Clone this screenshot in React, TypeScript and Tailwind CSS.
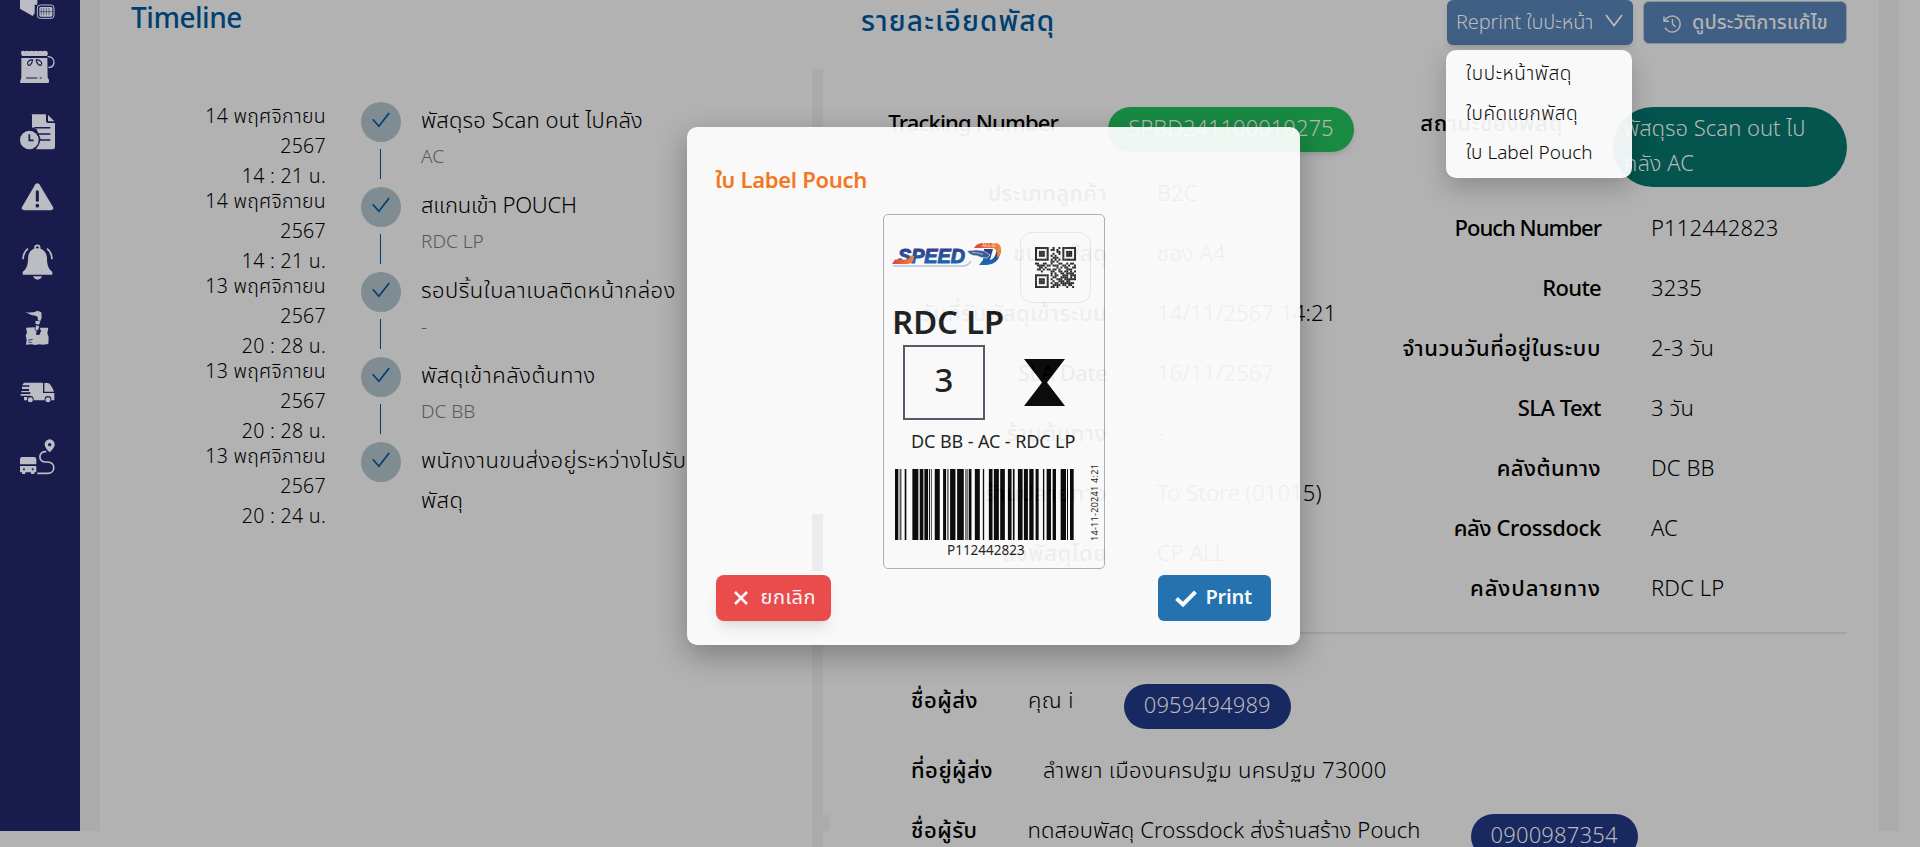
import type { ReactNode } from "react";

const events = [
  { date: "14 พฤศจิกายน", time: "14 : 21 น.", title: "พัสดุรอ Scan out ไปคลัง", place: "AC", fit: "tracking-[.15px]" },
  { date: "14 พฤศจิกายน", time: "14 : 21 น.", title: "สแกนเข้า POUCH", place: "RDC LP", fit: "tracking-[-.2px]" },
  { date: "13 พฤศจิกายน", time: "20 : 28 น.", title: "รอปริ้นใบลาเบลติดหน้ากล่อง", place: "-", fit: "tracking-[.5px]" },
  { date: "13 พฤศจิกายน", time: "20 : 28 น.", title: "พัสดุเข้าคลังต้นทาง", place: "DC BB", fit: "tracking-[.6px]" },
  { date: "13 พฤศจิกายน", time: "20 : 24 น.", title: "พนักงานขนส่งอยู่ระหว่างไปรับพัสดุ", place: "", fit: "tracking-[.45px]" },
];

const leftRows = [
  ["ประเภทลูกค้า", "B2C", "tracking-[.45px]"],
  ["ขนาดพัสดุ", "ซอง A4", "tracking-[.45px]"],
  ["วันที่รับพัสดุเข้าระบบ", "14/11/2567 14:21", "tracking-[.5px]"],
  ["SLA Date", "16/11/2567", "tracking-[-.6px]"],
  ["ร้านต้นทาง", "-", "tracking-[.5px]"],
  ["ร้านปลายทาง", "To Store (01015)", "tracking-[.5px]"],
  ["ส่งพัสดุโดย", "CP ALL", "tracking-[.5px]"],
];

const rightRows = [
  ["Pouch Number", "P112442823", "tracking-[-1px]"],
  ["Route", "3235", "tracking-[-.7px]"],
  ["จำนวนวันที่อยู่ในระบบ", "2-3 วัน", "tracking-[.6px]"],
  ["SLA Text", "3 วัน", "tracking-[-.5px]"],
  ["คลังต้นทาง", "DC BB", "tracking-[.4px]"],
  ["คลัง Crossdock", "AC", "tracking-[-.35px]"],
  ["คลังปลายทาง", "RDC LP", "tracking-[.9px]"],
];

const bars = [
  [76, 10], [90, 3], [96, 1], [105, 5], [128, 18], [150, 11], [164, 11], [178, 3], [184, 2], [195, 15], [220, 9],
  [233, 3], [241, 16], [262, 20], [287, 3], [293, 2], [297, 8], [315, 15], [339, 4], [357, 11], [372, 15],
  [391, 14], [414, 11], [429, 5], [444, 14], [462, 12], [478, 13], [497, 9], [519, 4], [530, 13], [548, 10],
  [572, 16], [591, 3], [600, 11],
];

const qr = [
  "111111100100101111111",
  "100000101101001000001",
  "101110100001101011101",
  "101110100100101011101",
  "101110101010001011101",
  "100000100111001000001",
  "111111101010101111111",
  "000000001101000000000",
  "110011001000110010110",
  "011110110111001101001",
  "001101000001010110011",
  "011010110110100011100",
  "000100001100110110101",
  "000000001010011011110",
  "111111101011001110111",
  "100000100110011110101",
  "101110101001110111111",
  "101110100100111011000",
  "101110101011011111110",
  "100000100111101101100",
  "111111101101000010010",
];

function SideIcons() {
  return (
    <nav className="flex h-[831px] w-20 shrink-0 flex-col bg-[#191b4d] pl-[19px] text-[#bbbcc4]">
      <svg className="h-[19px] w-9" viewBox="57 0 108 57" fill="currentColor">
        <path d="M60 0h52v14h-8v26l-6 8-38-22z" />
        <rect x="112" y="15" width="50" height="40" rx="9" stroke="currentColor" strokeWidth="3" fill="#191b4d" />
        <rect x="118" y="21" width="39" height="29" rx="4" />
        <path d="M124 24v22M131 24v22M139 24v22M147 24v22M119 35h37" stroke="#191b4d" strokeWidth="1.6" />
      </svg>
      <svg className="mt-[31px] h-[33px] w-9" viewBox="57 149 108 99" fill="currentColor">
        <path d="M64 153q6-4 11 0 7-4 13 0 7-4 13 0 7-4 13 0 7-4 13 0 7-4 14 0l3 6-3 8H66l-3-8zM64 173h78l1 59 4 6v8q-3 3-8 2H66q-6 1-6-4l4-12z" />
        <path d="M66 170h74" stroke="#191b4d" strokeWidth="3" />
        <path d="M143 169c13-1 20 9 19 18s-7 15-17 14" fill="none" stroke="currentColor" strokeWidth="4" />
        <path d="M98 178c-12 0-18 9-14 15s12-2 14-15m10 0c12 0 20 9 16 15s-14-2-16-15M78 233h34m7 0h6" fill="none" stroke="#191b4d" strokeWidth="3.5" />
      </svg>
      <svg className="mt-[31px] h-9 w-9" viewBox="57 341 108 108" fill="currentColor">
        <path d="M92 342h46v20q0 6 6 6h21v72q0 7-7 7h-50l14-30-12-30-14-6v-42q0-7 6-7z" />
        <path d="M144 344l19 19h-19z" />
        <path d="M102 382h49M112 401h39M118 419h33" stroke="#191b4d" strokeWidth="4.5" />
        <circle cx="88" cy="419" r="32" fill="#191b4d" />
        <circle cx="88" cy="419" r="28" />
        <path d="M88 402v18h13" fill="none" stroke="#191b4d" strokeWidth="5" />
      </svg>
      <svg className="mt-[33px] h-[28px] w-9" viewBox="57 548 108 84" fill="currentColor">
        <path d="M106 552q6-7 12 0l41 68q3 8-6 10H72q-9-2-6-10z" />
        <path d="M112 574v26" stroke="#191b4d" strokeWidth="9" strokeLinecap="round" />
        <circle cx="112" cy="616" r="5.5" fill="#191b4d" />
      </svg>
      <svg className="mt-[33px] h-9 w-9" viewBox="57 730 108 108" fill="currentColor">
        <circle cx="112" cy="741" r="7" fill="none" stroke="currentColor" strokeWidth="5" />
        <path d="M112 743c-18 0-28 14-28 30 0 24-6 32-16 41v8h89v-8c-10-9-16-17-16-41 0-16-11-30-29-30zM99 827h27q-4 10-13 10t-14-10z" />
        <path d="M84 744q-14 10-15 32M141 744q14 10 15 32" fill="none" stroke="currentColor" strokeWidth="5" />
      </svg>
      <svg className="mt-[30px] h-[36px] w-9" viewBox="57 928 108 108" fill="currentColor">
        <path d="M75 934q20 5 38-4l11 5 1 16-4 10-7-2-1-6q2-5-4-7-17-2-34-12zM107 960l14 2-4 10-11-3z" />
        <path d="M78 981l27-1-1 8 6 2-2 12 10 1 6-14-4-2 1-6 24 0-3 17 4 12-1 20-17 2-9-1-14 2-10-2-17 1 2-14-3-14 4-8z" />
        <path d="M108 974l10 3-4 12-8-2z" />
        <path d="M84 1019l14-3M86 1025h9" fill="none" stroke="#191b4d" strokeWidth="2.5" />
      </svg>
      <svg className="mt-[36px] h-[22px] w-9" viewBox="57 1144 108 66" fill="currentColor">
        <path d="M72 1146h57v31h34v22H72v-10h20v-4H62v-5h29v-5H64v-4h23v-6H66v-7h22v-4H66zM133 1147h10q9 0 19 26h-29z" />
        <circle cx="91" cy="1196" r="10" fill="#191b4d" />
        <circle cx="91" cy="1197" r="7.5" />
        <circle cx="144" cy="1196" r="10" fill="#191b4d" />
        <circle cx="144" cy="1197" r="7.5" />
      </svg>
      <svg className="mt-[35px] h-9 w-9" viewBox="57 1316 108 108" fill="currentColor">
        <path d="M149 1317a15 15 0 0 1 15 16q-1 10-15 23-14-13-15-23a15 15 0 0 1 15-16z" />
        <circle cx="149" cy="1333" r="5" fill="#191b4d" />
        <path d="M139 1354c-25-3-25 31-4 31h8c25 0 24 34 0 34h-31" fill="none" stroke="currentColor" strokeWidth="5" />
        <path d="M66 1370h36q6 0 7 6v16H60v-16q1-6 6-6zM60 1397h49v19h-6v5H93v-5H76v5H66v-5h-6z" />
        <circle cx="72" cy="1407" r="3" fill="#191b4d" />
        <circle cx="98" cy="1407" r="3" fill="#191b4d" />
      </svg>
    </nav>
  );
}

function Timeline() {
  return (
    <section className="flex w-[712px] shrink-0 flex-col">
      <h2 className="ml-[31px] h-[102px] text-[28px] leading-[40px] font-medium tracking-[-.5px] text-[#003f71]">Timeline</h2>
      {events.map((e, i) => (
        <div key={i} className="flex h-[85px]">
          <div className="w-[226px] shrink-0 text-right text-[19.500px] leading-[30px] font-light tracking-[.3px]">
            <p>{e.date}</p>
            <p>2567</p>
            <p>{e.time}</p>
          </div>
          <div className="ml-[35px] flex w-10 shrink-0 flex-col items-center">
            <div className="flex h-10 w-10 items-center justify-center rounded-full bg-[#7f8c91]">
              <svg className="mb-1 h-4 w-[18px]" viewBox="0 0 18 16" fill="none" stroke="#003f71" strokeWidth="1.7">
                <path d="M.7 7.2l6.2 7L17.2 1" />
              </svg>
            </div>
            {i < 4 && <div className="mt-[7px] mr-px h-[30px] w-px bg-[#003f71]" />}
          </div>
          <div className="ml-[20px] w-[290px] shrink-0">
            <p className={`text-[22px] leading-10 font-light ${e.fit}`}>{e.title}</p>
            <p className="mt-px text-[19px] leading-[30px] font-light text-[#585858]">{e.place}</p>
          </div>
        </div>
      ))}
    </section>
  );
}

function Row({ label, children, width, fit }: { label: string; children: ReactNode; width: string; fit: string }) {
  return (
    <div className="mb-[25px] flex leading-[35px] whitespace-nowrap">
      <span className={`shrink-0 text-right font-medium ${width} ${fit}`}>{label}</span>
      <span className="ml-[50px] font-light tracking-[.15px]">{children}</span>
    </div>
  );
}

function Contact({ label, value, phone, fit }: { label: string; value: string; phone?: string; fit: string }) {
  return (
    <div className="mb-[25px] flex items-start leading-[35px] whitespace-nowrap">
      <span className="font-medium tracking-[.5px]">{label}</span>
      <span className={`ml-[50px] font-light ${fit}`}>{value}</span>
      {phone && <span className="ml-[50px] h-[45px] rounded-full bg-[#182860] px-[20px] pt-[5px] font-light tracking-[.15px] text-[#b8b8b8]">{phone}</span>}
    </div>
  );
}

function Details() {
  return (
    <section className="flex w-[1056px] shrink-0 flex-col pl-[38px] text-[22px]">
      <header className="flex h-[107px] w-[986px] shrink-0 items-start">
        <h2 className="flex-1 text-[28px] leading-[46px] font-medium tracking-[1.15px] whitespace-nowrap text-[#003f71]">รายละเอียดพัสดุ</h2>
        <div className="relative">
          <button className="flex h-[45px] w-[186px] items-center rounded-md bg-[#3f5f85] pl-[9px] text-[20px] font-light tracking-[-.15px] whitespace-nowrap text-[#bcbcbc] shadow-md">
            <span className="w-[149px] text-left">Reprint ใบปะหน้า</span>
            <svg className="mb-1 h-[13px] w-[18px]" viewBox="0 0 18 13" fill="none" stroke="currentColor" strokeWidth="1.7">
              <path d="M1 1l8 10.5L17 1" />
            </svg>
          </button>
          <ul className="absolute top-[50px] -left-px z-20 h-32 w-[186px] rounded-[10px] bg-white pt-[5px] pl-5 text-[19px] leading-[39.5px] font-light whitespace-nowrap text-black opacity-[.93] shadow-[0_10px_25px_rgba(0,0,0,.22)]">
            <li className="tracking-[.6px]">ใบปะหน้าพัสดุ</li>
            <li className="tracking-[.5px]">ใบคัดแยกพัสดุ</li>
            <li>ใบ Label Pouch</li>
          </ul>
        </div>
        <button className="mt-px ml-2.5 flex h-[43px] w-[204px] items-center rounded-md border border-[#8b929b] bg-[#3f5f85] pl-[19px] text-[20px] font-medium whitespace-nowrap text-[#b2b2b2]">
          <svg className="mt-0.5 mr-2.5 h-[19px] w-[19px]" viewBox="0 0 19 19" fill="none" stroke="currentColor" strokeWidth="1.4">
            <path d="M1 2.5v4.800h5M1.800 7A8 8 0 1 1 2 13.500M9.500 5v5l3 3" />
          </svg>
          ดูประวัติการแก้ไข
        </button>
      </header>
      <div className="flex h-[525px] shrink-0">
        <div className="w-[504px] shrink-0">
          <div className="mb-[25px] flex h-[45px] leading-[35px]">
            <span className="w-[197px] shrink-0 text-right font-medium tracking-[-.85px]">Tracking Number</span>
            <span className="ml-[50px] w-[246px] shrink-0 rounded-full bg-[#188a42] pt-[5px] text-center font-light text-[#b8b8b8] shadow-md">SPBD241100010275</span>
          </div>
          {leftRows.map(([l, v, fit]) => (
            <Row key={l} label={l} width="w-[246px]" fit={fit}>{v}</Row>
          ))}
        </div>
        <div className="w-[482px] shrink-0">
          <div className="mb-[25px] flex h-20 leading-[35px]">
            <span className="w-[198px] shrink-0 text-right font-medium tracking-[.65px] whitespace-nowrap">สถานะของพัสดุ</span>
            <span className="ml-[50px] w-[234px] shrink-0 rounded-[40px] bg-[#03554e] py-[5px] pl-[11px] font-light text-[#b8b8b8]">
              พัสดุรอ Scan out ไป
              <br />
              คลัง AC
            </span>
          </div>
          {rightRows.map(([l, v, fit]) => (
            <Row key={l} label={l} width="w-[236px]" fit={fit}>{v}</Row>
          ))}
        </div>
      </div>
      <div className="h-0.5 w-[986px] shrink-0 bg-[#a2a2a2]" />
      <div className="mt-[50px] flex h-[163px] shrink-0 flex-col overflow-hidden pl-[50px]">
        <Contact label="ชื่อผู้ส่ง" value="คุณ i" phone="0959494989" fit="tracking-[.4px]" />
        <Contact label="ที่อยู่ผู้ส่ง" value="ลำพยา เมืองนครปฐม นครปฐม 73000" fit="tracking-[.35px]" />
        <Contact label="ชื่อผู้รับ" value="ทดสอบพัสดุ Crossdock ส่งร้านสร้าง Pouch" phone="0900987354" fit="tracking-[.1px]" />
      </div>
    </section>
  );
}

function Logo() {
  return (
    <svg className="h-[26px] w-[112px]" viewBox="0 0 112 26">
      <defs>
        <linearGradient id="blue" x1="0" y1="0" x2="0" y2="1">
          <stop offset="0" stopColor="#34287a" />
          <stop offset="1" stopColor="#0f68b8" />
        </linearGradient>
        <linearGradient id="orange" x1="0" y1="0" x2="1" y2="0">
          <stop offset="0" stopColor="#e23b2c" />
          <stop offset="1" stopColor="#f58634" />
        </linearGradient>
      </defs>
      <path d="M1 24h70q5 0 8-5" fill="none" stroke="#b9c6dd" strokeWidth="1.500" />
      <text x="6" y="20.500" fontSize="21" fontWeight="900" fontStyle="italic" fontFamily="Liberation Sans, sans-serif" textLength="67" lengthAdjust="spacingAndGlyphs" fill="url(#blue)" stroke="url(#blue)" strokeWidth="1.1">SPEED</text>
      <path d="M3 17.500h12q3-.5 3-4l4 .5q0 8-7 8H0z" fill="url(#orange)" />
      <path d="M92 7h9l-3 11h-7z" fill="url(#blue)" />
      <path d="M87 23l4-5h6q5 0 7-7l1-5 4 1q-1 15-14 16z" fill="url(#blue)" />
      <path d="M82 6q3-5 9-5h12q7 0 6 9-1 4-4 6 1-9-4-10z" fill="url(#orange)" />
      <path d="M75 9q10-2 17 0l6 4-3 3q-7 0-9-2-8 0-11-5z" fill="#34578f" stroke="#f2f5fa" strokeWidth=".6" />
      <path d="M80 10.500q7 0 11 2" stroke="#b6c6de" strokeWidth=".9" fill="none" />
      <text x="90" y="5.300" fontSize="4.500" fontWeight="700" fontFamily="Liberation Sans, sans-serif" fill="#fbd9b4">ALL-D</text>
    </svg>
  );
}

function PouchLabel() {
  return (
    <div className="relative ml-[168px] h-[355px] w-[222px] rounded-[5px] border border-[#a9afbe] text-[#181818]">
      <div className="flex h-[88px] pt-[17px]">
        <div className="mt-[10px] ml-[8px] w-[128px]">
          <Logo />
        </div>
        <div className="flex h-[71px] w-[71px] items-center justify-center rounded-xl border border-[#e9eaeb]">
          <svg className="h-[41px] w-[41px]" viewBox="0 0 21 21" fill="#222">
            {qr.map((r, y) => [...r].map((c, x) => c === "1" && <rect key={`${x}-${y}`} x={x} y={y} width="1.02" height="1.02" />))}
          </svg>
        </div>
      </div>
      <p className="ml-[8px] h-[42px] text-[33px] leading-[42px] font-semibold tracking-[-.3px] whitespace-nowrap">RDC LP</p>
      <div className="flex">
        <div className="ml-[19px] flex h-[75px] w-[82px] items-center justify-center border-2 border-[#4b5563] text-[33px] font-medium">3</div>
        <svg className="mt-[14px] ml-[39px] h-[47px] w-[41px]" viewBox="0 0 41 47" fill="#000">
          <path d="M0 0h41L23 23.500 41 47H0l18-23.500z" />
        </svg>
      </div>
      <p className="mt-[6px] ml-[27px] h-[43px] text-[18px] leading-[34px] tracking-[-.1px] whitespace-nowrap">DC BB - AC - RDC LP</p>
      <svg className="ml-[11px] h-[71px] w-[179px]" viewBox="76 0 536 71" preserveAspectRatio="none" fill="#000">
        {bars.map(([x, w]) => (
          <rect key={x} x={x} width={w} height="71" />
        ))}
      </svg>
      <p className="ml-[63px] text-[13.500px] leading-[23px]">P112442823</p>
      <div className="absolute right-[3px] bottom-[27px] h-[76px] w-[12px] rotate-180 text-[9px] leading-[12px] tracking-[.3px] whitespace-nowrap [writing-mode:vertical-rl]">14-11-20241 4:21</div>
    </div>
  );
}

function Modal() {
  return (
    <div className="absolute top-[127px] left-[687px] z-10 h-[518px] w-[613px] rounded-[10px] bg-white pt-[29px] pl-7 opacity-[.93] shadow-[0_10px_30px_rgba(0,0,0,.32)]">
      <div className="absolute top-[387px] left-[125px] h-[57px] w-[11px] bg-[#f0f1f4]" />
      <h3 className="h-[58px] text-[22px] leading-[52px] font-semibold tracking-[-.3px] text-[#f97316]">ใบ Label Pouch</h3>
      <PouchLabel />
      <div className="mt-[6px] ml-[.5px] flex w-[555px] justify-between">
        <button className="flex h-[46px] w-[115px] items-center rounded-lg bg-[#ef4444] pl-[18px] text-[20px] tracking-[.5px] text-white shadow-lg">
          <svg className="mr-[13px] h-[14px] w-[14px]" viewBox="0 0 14 14" stroke="white" strokeWidth="2.600">
            <path d="M1 1l12 12M13 1L1 13" />
          </svg>
          ยกเลิก
        </button>
        <button className="flex h-[46px] w-[113px] items-center rounded-md bg-[#1a6fb0] pl-[17px] text-[20px] font-semibold tracking-[-.3px] text-white">
          <svg className="mr-[9px] h-[17px] w-[22px]" viewBox="0 0 22 17" fill="none" stroke="white" strokeWidth="4">
            <path d="M1.500 8.500l6.500 6L20.500 1.800" />
          </svg>
          Print
        </button>
      </div>
    </div>
  );
}

export default function App() {
  return (
    <div className="relative h-[847px] w-[1920px] overflow-hidden bg-[#b2b2b2] font-['Noto_Sans_Thai','Noto_Sans',sans-serif] text-black">
      <div className="flex h-[847px]">
        <SideIcons />
        <div className="h-[831px] w-5 shrink-0 bg-[#ababab]" />
        <Timeline />
        <div className="mt-[69px] w-[11px] shrink-0 bg-[#ababab]" />
        <Details />
        <div className="h-[831px] w-5 shrink-0 bg-[#ababab]" />
      </div>
      <div className="absolute top-[815px] left-[823px] h-4 w-1.5 bg-[#ababab]" />
      <Modal />
    </div>
  );
}
